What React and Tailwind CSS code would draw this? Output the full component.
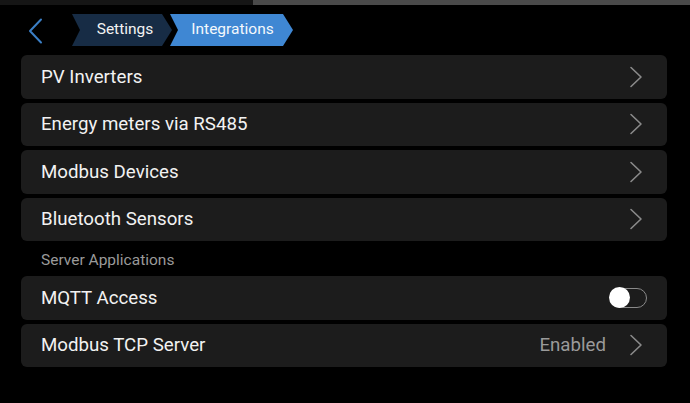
import React from "react";

const Chevron = () => (
  <svg width="14" height="22" viewBox="0 0 14 22" fill="none" className="shrink-0">
    <path d="M2 1.5 L12 11 L2 20.5" stroke="#8a8a8a" strokeWidth="1.6" strokeLinecap="round" strokeLinejoin="round" />
  </svg>
);

const Row = ({ label, children }) => (
  <div className="flex h-[43.5px] items-center justify-between rounded-[6px] bg-[#1c1c1c] pl-[20px] pr-[24px]">
    <span className="text-[18.7px] text-[#f2f2f2]">{label}</span>
    <div className="flex items-center gap-[23px]">{children}</div>
  </div>
);

export default function App() {
  return (
    <div
      className="relative h-[403px] w-[690px] overflow-hidden bg-black"
      style={{ fontFamily: "Roboto, 'Noto Sans', sans-serif" }}
    >
      <div className="flex h-[5px]">
        <div className="w-[253px] bg-[#151515]" />
        <div className="flex-1 bg-[#4a4a4a]" />
      </div>
      <div className="flex h-[50px] items-start pl-[28px] pt-[9px]">
        <svg width="16" height="26" viewBox="0 0 16 26" fill="none" className="mt-[4px]">
          <path d="M13 1.5 L2 13 L13 24.5" stroke="#3b7fc6" strokeWidth="2" strokeLinecap="round" strokeLinejoin="round" />
        </svg>
        <div className="ml-[28px] flex h-[32px] items-center">
          <div className="flex h-full w-[100px] items-center justify-center bg-[#172c45] pl-[6px] text-[15.5px] text-[#f2f2f2] [clip-path:polygon(0_0,90px_0,100%_50%,90px_100%,0_100%,8px_50%)]">
            Settings
          </div>
          <div className="-ml-[2px] flex h-full w-[123px] items-center justify-center bg-[#3f87d3] pl-[2px] text-[15.5px] text-[#f4f8fc] [clip-path:polygon(0_0,113px_0,100%_50%,113px_100%,0_100%,8px_50%)]">
            Integrations
          </div>
        </div>
      </div>
      <div className="flex flex-col gap-[4px] pl-[21px] pr-[23px]">
        <Row label="PV Inverters"><Chevron /></Row>
        <Row label="Energy meters via RS485"><Chevron /></Row>
        <Row label="Modbus Devices"><Chevron /></Row>
        <Row label="Bluetooth Sensors"><Chevron /></Row>
        <div className="flex h-[27px] items-end pb-0 pl-[20px] text-[15.5px] text-[#9a9a9a]">Server Applications</div>
        <div className="flex h-[43.5px] items-center justify-between rounded-[6px] bg-[#1c1c1c] pl-[20px] pr-[20px]">
          <span className="text-[18.7px] text-[#f2f2f2]">MQTT Access</span>
          <div className="relative h-[20px] w-[37px] rounded-full border-[1.5px] border-[#8a8a8a]">
            <div className="absolute -left-[2px] -top-[2px] h-[21px] w-[21px] rounded-full bg-white" />
          </div>
        </div>
        <Row label="Modbus TCP Server">
          <span className="text-[18.7px] text-[#9a9a9a]">Enabled</span>
          <Chevron />
        </Row>
      </div>
    </div>
  );
}
